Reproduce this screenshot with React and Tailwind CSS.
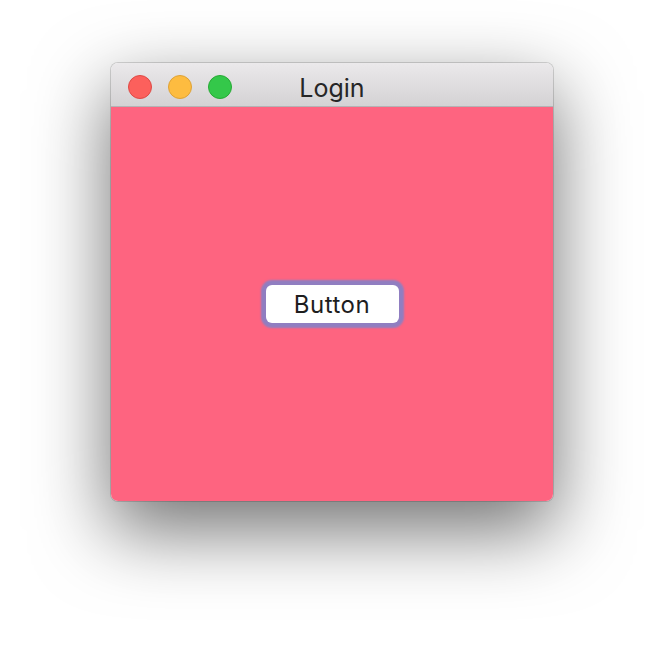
import React from 'react';

const Light = ({ color }) => (
  <span className={`block w-6 h-6 rounded-full border ${color}`} />
);

const App = () => {
  return (
    <div className="w-[664px] h-[662px] bg-white flex justify-center pt-[63px] overflow-hidden font-['Inter','Open_Sans',sans-serif]">
      <div className="w-[442px] h-[438px] flex flex-col rounded-[7px] overflow-hidden shadow-[0_28px_75px_2px_rgba(0,0,0,0.55)] ring-1 ring-black/15">
        <div className="relative h-[44px] shrink-0 flex items-center px-[17px] pt-[4px] gap-4 bg-gradient-to-b from-[#ebe9eb] to-[#d4d2d4] border-b border-[#b4b2b4]">
          <Light color="bg-[#fc605c] border-[#de4a45]" />
          <Light color="bg-[#fdbc40] border-[#dea236]" />
          <Light color="bg-[#34c84a] border-[#27aa35]" />
          <span className="absolute inset-0 pt-[8px] flex items-center justify-center text-[25px] text-[#262626] pointer-events-none">
            Login
          </span>
        </div>
        <div className="flex-1 bg-[#fe6480] flex items-center justify-center">
          <button className="w-[133px] h-[38px] pt-[2px] bg-white rounded-[6px] text-[24px] tracking-[0.5px] text-[#1e1e1e] leading-none shadow-[0_0_2px_5px_rgba(138,128,196,0.95)]">
            Button
          </button>
        </div>
      </div>
    </div>
  );
};

export default App;
